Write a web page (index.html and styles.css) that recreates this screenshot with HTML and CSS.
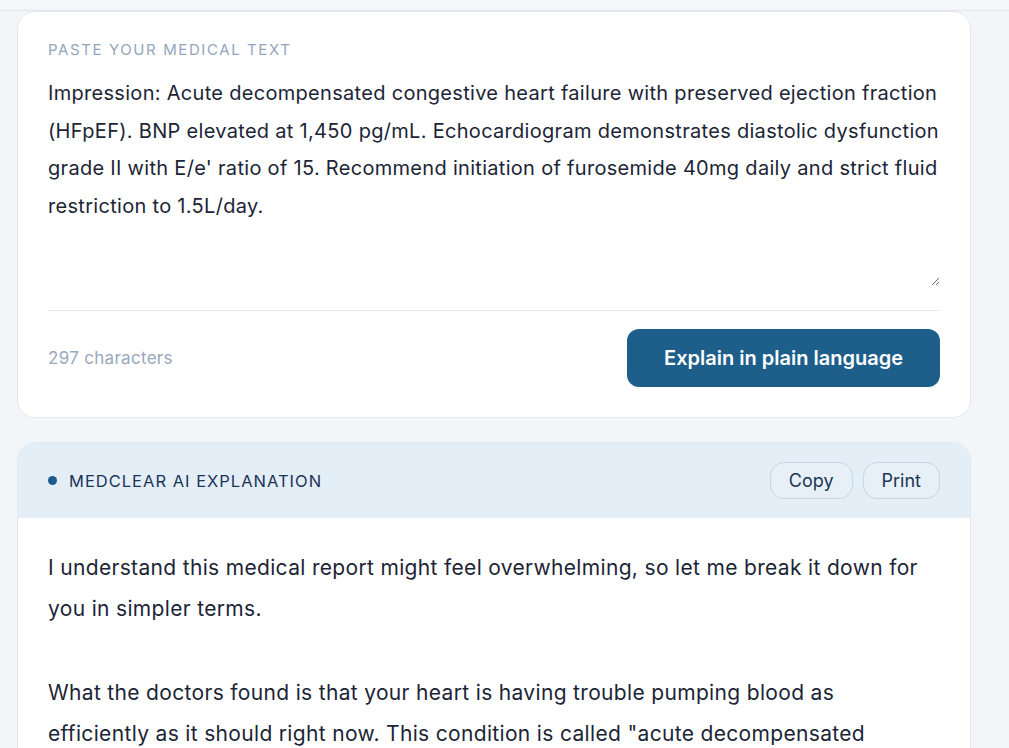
FILE: index.html
```html
<!DOCTYPE html>
<html lang="en">
<head>
<meta charset="utf-8">
<title>MedClear</title>
<link rel="stylesheet" href="styles.css">
</head>
<body>
<div class="topbar"></div>
<main class="page">
  <section class="card input-card">
    <div class="field-label">PASTE YOUR MEDICAL TEXT</div>
    <textarea class="med-text">Impression: Acute decompensated congestive heart failure with preserved ejection fraction (HFpEF). BNP elevated at 1,450 pg/mL. Echocardiogram demonstrates diastolic dysfunction grade II with E/e' ratio of 15. Recommend initiation of furosemide 40mg daily and strict fluid restriction to 1.5L/day.</textarea>
    <div class="input-footer">
      <span class="char-count">297 characters</span>
      <button class="primary-btn">Explain in plain language</button>
    </div>
  </section>

  <section class="card result-card">
    <header class="result-head">
      <div class="result-title"><span class="dot"></span>MEDCLEAR AI EXPLANATION</div>
      <div class="result-actions">
        <button class="ghost-btn">Copy</button>
        <button class="ghost-btn">Print</button>
      </div>
    </header>
    <div class="result-body">
      <p>I understand this medical report might feel overwhelming, so let me break it down for you in simpler terms.</p>
      <p>What the doctors found is that your heart is having trouble pumping blood as efficiently as it should right now. This condition is called "acute decompensated congestive heart failure with preserved ejection fraction."</p>
    </div>
  </section>
</main>
</body>
</html>
```

FILE: styles.css
```css
* { box-sizing: border-box; }
html, body { margin: 0; padding: 0; }
body {
  background: #f3f6f9;
  font-family: "Inter", "Noto Sans", sans-serif;
  color: #1c2536;
  height: 748px;
  overflow: hidden;
}
.topbar {
  height: 11px;
  background: #f4f6f9;
  border-bottom: 1px solid #e1e6ec;
}
.page {
  padding: 0 38px 0 17px;
}
.card {
  background: #fff;
  border: 1px solid #e3e8ee;
  border-radius: 18px;
}
.input-card {
  padding: 28px 30px 30px;
  display: flex;
  flex-direction: column;
}
.field-label {
  font-size: 15px;
  line-height: 20px;
  letter-spacing: 1.6px;
  color: #94a6bd;
}
.med-text {
  margin-top: 15px;
  height: 211px;
  width: 100%;
  border: none;
  outline: none;
  padding: 0;
  resize: vertical;
  font-family: inherit;
  font-size: 20px;
  letter-spacing: 0.3px;
  line-height: 37.5px;
  color: #1c2536;
  background: transparent;
  overflow: hidden;
}
.input-footer {
  margin-top: 24px;
  border-top: 1px solid #e6eaef;
  padding-top: 18px;
  display: flex;
  align-items: center;
  justify-content: space-between;
}
.char-count {
  font-size: 17px;
  letter-spacing: 0.3px;
  color: #98a8bd;
}
.primary-btn {
  height: 58px;
  width: 313px;
  border: none;
  border-radius: 12px;
  background: #1e5e8b;
  color: #fff;
  font-family: inherit;
  font-size: 20px;
  font-weight: 600;
}
.result-card {
  margin-top: 24px;
  overflow: hidden;
}
.result-head {
  height: 75px;
  background: #e4eef7;
  padding: 0 30px;
  display: flex;
  align-items: center;
  justify-content: space-between;
}
.result-title {
  display: flex;
  align-items: center;
  gap: 12px;
  font-size: 16.5px;
  letter-spacing: 1px;
  color: #1b3556;
}
.dot {
  width: 9px;
  height: 9px;
  border-radius: 50%;
  background: #1e5a8c;
}
.result-actions {
  display: flex;
  gap: 10px;
}
.ghost-btn {
  height: 37px;
  padding: 0 18px;
  border: 1px solid #c6d6e4;
  border-radius: 14px;
  background: #e8f0f7;
  font-family: inherit;
  font-size: 18px;
  color: #1b3556;
}
.result-body {
  padding: 30px 30px 0;
  font-size: 21px;
  letter-spacing: 0.33px;
  line-height: 40.5px;
  color: #1c2536;
}
.result-body p {
  margin: 0 0 44px;
}
```
